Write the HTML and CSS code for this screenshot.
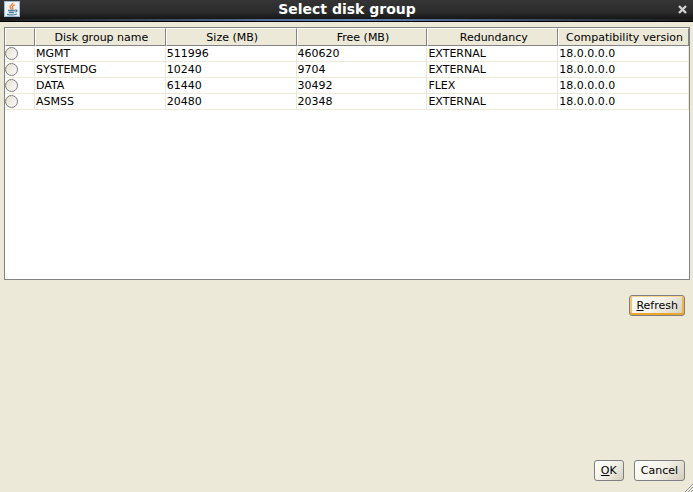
FILE: index.html
```
<!DOCTYPE html>
<html lang="en">

<head>
  <meta charset="UTF-8">
  <meta name="viewport" content="width=device-width, initial-scale=1.0">
  <title>Select disk group</title>
  <link rel="stylesheet" href="styles.css">
</head>

<body>
  <header class="titlebar">
    <svg class="app-icon" viewBox="0 0 16 16" aria-hidden="true">
      <rect x="0.5" y="0.5" width="15" height="15" fill="#eef3f7" stroke="#9dbbd0" />
      <path d="M8.8 1.8C9.4 3.6 5.5 4.3 6.1 6.2C6.4 7 7.4 7.6 7.2 8.7M10.8 3.9C8.6 4.8 7.7 5.8 8.6 6.8C9 7.4 8.8 8 8.3 8.5" fill="none" stroke="#ee7d2c" stroke-width="1.3" />
      <path d="M4 9.5H10.8M4.8 11.5H10.2M11 9.2C13.8 8.4 13.4 10.8 11.2 11.2M3 13.3C5.5 14.2 10.5 14.2 13 13" fill="none" stroke="#52809f" stroke-width="1.3" />
    </svg>
    <h1 class="title">Select disk group</h1>
    <button class="close" type="button" aria-label="Close">
      <svg viewBox="0 0 9 9" aria-hidden="true">
        <path d="M1 1L8 8M8 1L1 8" stroke="#d0d0d0" stroke-width="2.4" />
      </svg>
    </button>
  </header>

  <main class="dialog">
    <div class="table-pane">
      <table class="disk-groups">
        <colgroup>
          <col class="col-select">
          <col span="5">
        </colgroup>
        <thead>
          <tr>
            <th></th>
            <th>Disk group name</th>
            <th>Size (MB)</th>
            <th>Free (MB)</th>
            <th>Redundancy</th>
            <th>Compatibility version</th>
          </tr>
        </thead>
        <tbody>
          <tr>
            <td><input type="radio" name="group" id="g1"></td>
            <td><label for="g1">MGMT</label></td>
            <td>511996</td>
            <td>460620</td>
            <td>EXTERNAL</td>
            <td>18.0.0.0.0</td>
          </tr>
          <tr>
            <td><input type="radio" name="group" id="g2"></td>
            <td><label for="g2">SYSTEMDG</label></td>
            <td>10240</td>
            <td>9704</td>
            <td>EXTERNAL</td>
            <td>18.0.0.0.0</td>
          </tr>
          <tr>
            <td><input type="radio" name="group" id="g3"></td>
            <td><label for="g3">DATA</label></td>
            <td>61440</td>
            <td>30492</td>
            <td>FLEX</td>
            <td>18.0.0.0.0</td>
          </tr>
          <tr>
            <td><input type="radio" name="group" id="g4"></td>
            <td><label for="g4">ASMSS</label></td>
            <td>20480</td>
            <td>20348</td>
            <td>EXTERNAL</td>
            <td>18.0.0.0.0</td>
          </tr>
        </tbody>
      </table>
    </div>

    <div class="refresh-area">
      <button class="btn btn-default" type="button" accesskey="r"><u>R</u>efresh</button>
    </div>

    <footer class="actions">
      <button class="btn" type="button" accesskey="o"><u>O</u>K</button>
      <button class="btn" type="button">Cancel</button>
    </footer>
  </main>

  <svg class="resize-grip" viewBox="0 0 8 8" aria-hidden="true">
    <path d="M0 8L8 0M3 8L8 3M6 8L8 6" stroke="#98978f" />
    <path d="M1 8L8 1M4 8L8 4M7 8L8 7" stroke="#ffffff" />
  </svg>
</body>

</html>
```

FILE: styles.css
```
* {
  box-sizing: border-box;
}
body {
  margin: 0;
  min-height: 100vh;
  display: flex;
  flex-direction: column;
  background: #ece9d8;
  color: #000;
  font: 11px/15px "DejaVu Sans", sans-serif;
}

/* window title bar */
.titlebar {
  display: grid;
  grid-template-columns: 16px 1fr 16px;
  align-items: center;
  height: 22px;
  padding: 0 3px 3px 4px;
  background:
    linear-gradient(90deg, #1c1c1c, #6486bd 50%, #1c1c1c) bottom / 100% 2px no-repeat,
    linear-gradient(#353535, #2b2b2b 12px, #161616 19px);
  border-bottom: 1px solid #000;
}
.app-icon {
  width: 16px;
  height: 16px;
}
.title {
  margin: 0;
  color: #fff;
  font-size: 14px;
  line-height: 18px;
  text-align: center;
}
.close {
  display: flex;
  justify-content: center;
  padding: 0;
  border: 0;
  background: none;
}
.close svg {
  width: 9px;
  height: 9px;
}

.dialog {
  flex: 1;
  display: flex;
  flex-direction: column;
  padding: 5px 3px 11px 4px;
}

/* disk group table */
.table-pane {
  flex: 7 0 0px;
  border: 1px solid #848484;
  background: #fff;
}
.disk-groups {
  width: 100%;
  table-layout: fixed;
  border-collapse: separate;
  border-spacing: 0;
}
.col-select {
  width: 30px;
}
.disk-groups th {
  height: 18px;
  padding: 0 0 0 2px;
  border: 1px solid #848484;
  border-top-color: #fff;
  border-left-color: #fff;
  background: #ece9d8;
  font-weight: normal;
  white-space: nowrap;
}
.disk-groups td {
  height: 16px;
  padding: 0 1px;
  border-right: 1px solid #ece9d8;
  border-bottom: 1px solid #ece9d8;
  line-height: 15px;
}
.disk-groups td:first-child {
  padding: 0;
}
.disk-groups input {
  display: block;
  appearance: none;
  width: 13px;
  height: 13px;
  margin: 0;
  border: 1px solid #7c7c7c;
  border-radius: 50%;
  background: linear-gradient(135deg, #e4e1d2, #fbfaf6);
}

.refresh-area {
  flex: 4 0 21px;
  display: flex;
  justify-content: flex-end;
  align-items: flex-start;
  margin-top: 15px;
  padding-right: 5px;
}
.actions {
  display: flex;
  justify-content: flex-end;
  gap: 10px;
  padding-right: 5px;
}
.btn {
  height: 21px;
  padding: 0 6px;
  border: 1px solid #7f7f7f;
  border-radius: 3px;
  background: linear-gradient(135deg, #fff, #f3f1e8 50%, #d3cfbe);
  color: #000;
  font: inherit;
}
.btn-default {
  box-shadow: inset 0 1px #fbd58a, inset 0 -2px #eda62c, inset 2px 0 #f7c566, inset -2px 0 #f0b448;
}

/* lies over the bottom right corner of the window */
.resize-grip {
  position: fixed;
  right: 0;
  bottom: 0;
  width: 8px;
  height: 8px;
}
```
